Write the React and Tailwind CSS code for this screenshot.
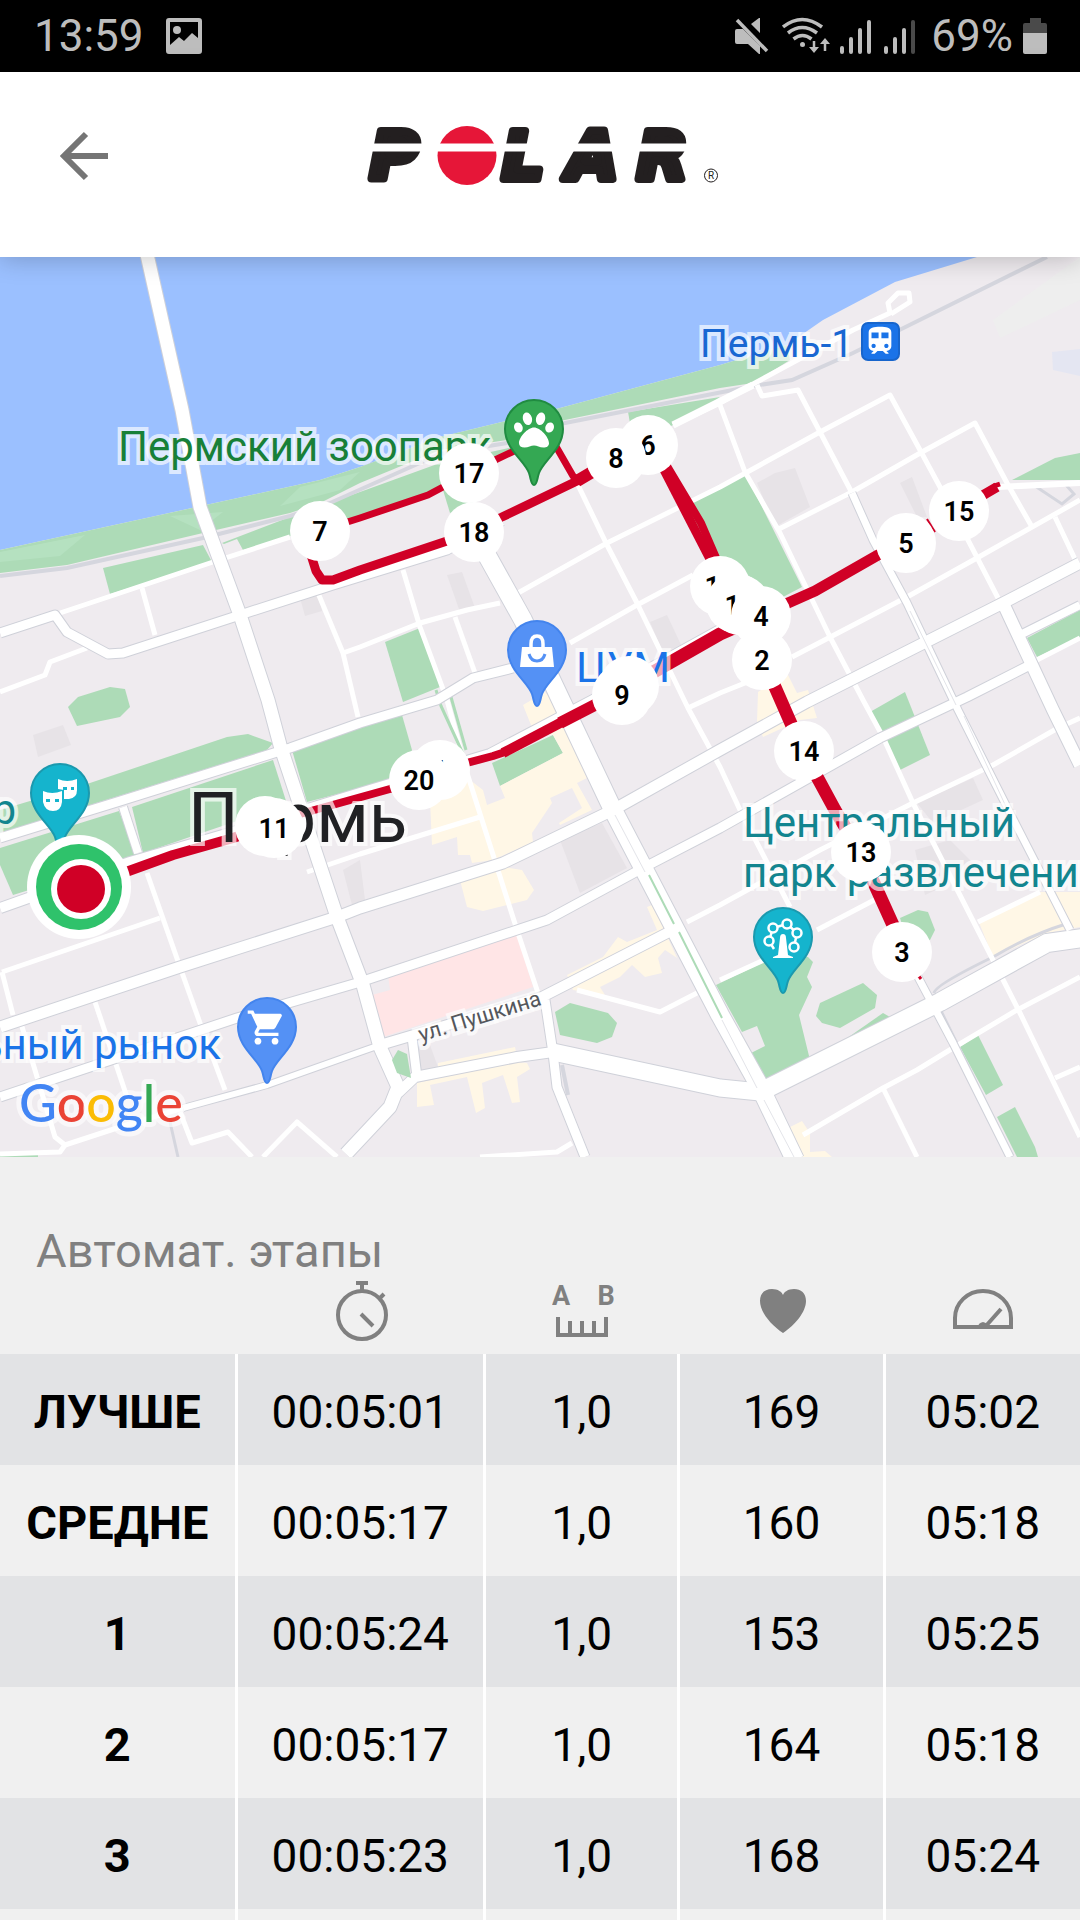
import { FaPaw } from 'react-icons/fa';
import { MdShoppingCart, MdTrain } from 'react-icons/md';

const LAPS = [
  { label: 'ЛУЧШЕ', time: '00:05:01', distance: '1,0', heartRate: '169', pace: '05:02' },
  { label: 'СРЕДНЕ', time: '00:05:17', distance: '1,0', heartRate: '160', pace: '05:18' },
  { label: '1', time: '00:05:24', distance: '1,0', heartRate: '153', pace: '05:25' },
  { label: '2', time: '00:05:17', distance: '1,0', heartRate: '164', pace: '05:18' },
  { label: '3', time: '00:05:23', distance: '1,0', heartRate: '168', pace: '05:24' },
];

// Later markers cover earlier ones
const MARKERS = [
  { n: '1', x: 440, y: 770 },
  { n: '20', x: 419, y: 780 },
  { n: '', x: 265, y: 826 },
  { n: '11', x: 274, y: 828 },
  { n: '', x: 629, y: 686 },
  { n: '9', x: 622, y: 695 },
  { n: '12', x: 720, y: 586 },
  { n: '', x: 736, y: 603 },
  { n: '16', x: 740, y: 605 },
  { n: '4', x: 761, y: 616 },
  { n: '2', x: 762, y: 660 },
  { n: '5', x: 906, y: 543 },
  { n: '15', x: 959, y: 511 },
  { n: '17', x: 469, y: 473 },
  { n: '18', x: 474, y: 532 },
  { n: '7', x: 320, y: 531 },
  { n: '6', x: 648, y: 445 },
  { n: '8', x: 616, y: 458 },
  { n: '14', x: 804, y: 751 },
  { n: '13', x: 861, y: 852 },
  { n: '3', x: 902, y: 952 },
];

const PARKS = [
  // river bank
  '0,550 320,480 360,467 440,437 560,408 720,365 787,345 790,360 753,383 720,388 560,421 507,440 440,450 360,483 320,503 290,513 203,533 67,565 0,573',
  '103,568 203,545 212,562 110,594',
  '222,543 290,517 360,492 440,463 513,447 495,460 443,487 360,517 287,537 243,550 237,539 224,544',
  '443,490 470,480 480,500 450,513',
  '628,412 720,397 713,402 673,425 640,440 630,423',
  '683,507 720,487 745,473 802,587 783,597 740,610 718,555',
  '78,697 110,687 125,689 130,707 120,717 77,726 68,707',
  '0,810 90,783 227,737 248,734 273,743 267,750 0,833',
  '0,848 119,811 136,855 100,868 13,895 0,865',
  '132,807 273,760 287,804 143,853',
  '292,750 360,728 402,715 412,750 400,778 307,802',
  '385,642 420,628 440,687 403,702',
  '492,763 553,735 563,753 500,786',
  '555,1012 570,1003 608,1013 617,1023 612,1037 597,1043 560,1035',
  '870,712 905,692 930,755 900,770',
  '1027,638 1080,610 1080,637 1037,657',
  '1012,480 1055,458 1080,453 1080,480',
  '716,985 783,953 808,957 813,962 807,977 812,987 799,1015 810,1060 765,1083 751,1053 765,1046 757,1026 742,1032',
  '820,1003 863,983 877,995 875,1008 840,1028 822,1023 816,1016',
  '823,1055 883,1013 890,1017',
  '900,918 918,910 928,912 935,930 930,940 910,950',
  '960,1047 978,1035 1003,1085 986,1095',
  '997,1117 1015,1107 1035,1147 1038,1157 1017,1157',
  '0,1155 38,1155 38,1157 0,1157',
];

const SHOPS = [
  '523,705 545,692 560,710 587,778 577,783 592,810 560,825 559,823 582,808 572,788 550,798 552,803 532,833 533,842 493,860 472,863 470,855 458,855 457,837 432,845 430,800 470,780 483,790 487,805 505,798 500,786 563,753 553,735 535,735',
  '460,880 503,867 522,870 534,890 527,900 483,911 467,907',
  '417,1083 515,1062 527,1063 530,1069 517,1077 520,1102 512,1103 503,1075 482,1083 485,1108 476,1113 467,1077 430,1085 434,1105 417,1107',
  '438,1063 515,1047 516,1052 438,1068',
  '567,975 603,957 618,937 627,942 657,930 647,907 652,905 663,927 677,958 665,950 658,958 662,973 645,977 632,965 620,977 600,987 605,995 573,990',
  '758,692 787,673 797,693 808,690 817,718 800,720 763,737 757,722',
  '978,920 1040,892 1080,892 1080,927 1047,933 993,957',
  '790,1127 802,1121 810,1133 810,1152 825,1151 832,1157 802,1157',
];

const BUILDINGS = [
  '757,483 775,473 795,468 810,507 775,527',
  '900,483 912,477 927,517 917,517',
  '560,840 602,823 627,868 580,893',
  '447,575 462,572 475,608 460,612',
  '650,622 667,615 682,647 662,650',
  '33,735 63,725 71,745 38,757',
  '415,1047 430,1045 438,1067 418,1072',
  '917,803 973,778 983,800 933,823',
  '915,850 950,840 980,870 925,895',
  '300,598 320,594 322,611 305,616',
  '343,870 360,860 365,900 352,905',
];

const STREETS = [
  '0,692 45,675 50,662 87,648',
  '60,613 213,562 290,537',
  '142,588 155,635',
  '318,593 343,653 358,717',
  '343,653 360,647 420,623 467,610 500,603',
  '403,570 420,627 447,700 467,773 517,930 538,993',
  '455,617 475,673',
  '757,385 762,396 798,390 820,432 852,493',
  '673,425 720,403 755,383 853,330 890,313 888,303 898,293 909,293 910,302 891,314',
  '720,405 745,472 780,533 830,637 863,700 883,737 913,803 993,960 1020,1013 1080,1137',
  '518,593 607,543 720,487 820,432 890,395 920,450 940,487 968,540 998,598',
  '777,530 852,492 922,452 975,423 1007,483 1032,527',
  '792,657 907,597 977,558 1080,500',
  '570,643 637,605 693,575',
  '688,708 720,693 760,677',
  '1055,517 1073,555 1080,570',
  '577,483 607,545 637,603 688,708 720,767 740,810 790,907',
  '817,930 880,897',
  '720,980 775,955',
  '687,922 720,905 820,850 913,803 993,765 1058,728 1080,718',
  '978,922 1040,892',
  '803,1135 883,1088 917,1070 953,1048 1017,1010 1080,977',
  '883,1088 917,1157',
  '1055,1078 1080,1067',
  '147,873 180,967 200,1023 225,1090',
  '2,972 160,918',
  '2,972 13,1015',
  '95,1002 127,1097',
  '307,872 360,854 480,817',
  '20,1020 55,1137 65,1145 60,1152 0,1154',
  '65,1145 120,1127 183,1108',
  '180,1112 192,1143 228,1132 252,1157',
  '263,1157 297,1122 337,1157',
  '480,1157 557,1152 572,1143',
  '577,990 660,1012 697,993',
  '1037,660 1080,638',
];

const ROADS = [
  { w: 8, p: '123,807 138,853' },
  { w: 7, p: '918,977 953,1043 1010,1157' },
  { w: 7, p: '852,493 873,540 907,603 958,710 1010,813 1070,930' },
  { w: 6, p: '183,1108 267,1085 360,1052 380,1045' },
  { w: 9, p: '0,633 55,615 67,632 108,654 123,653 240,615 333,585 447,550 502,521' },
  { w: 9, p: '0,838 117,802 290,748 360,723 437,700 473,678 513,668' },
  { w: 10, p: '0,908 130,862 233,832 360,793 490,754 593,700 720,630' },
  { w: 9, p: '545,1000 553,1053 557,1087 585,1157' },
  { w: 9, p: '412,1037 417,1077' },
  { w: 11, p: '0,1027 180,967 337,917 360,908 503,863 613,810 720,750 807,702 1003,603 1080,563' },
  { w: 9, p: '0,1097 237,1018 357,983 547,920 643,868 720,828 880,738 967,697 1030,665' },
  { w: 8, p: '1020,635 1080,605' },
  { w: 12, p: '1003,603 1053,710 1080,765' },
  { w: 10, p: '380,1045 542,997 673,930' },
  { w: 13, p: '146,250 182,410 200,507 240,615 268,700 280,745 337,917 363,985 380,1047 398,1087 390,1107 346,1154' },
  { w: 10, p: '398,1093 415,1077 517,1057 553,1052' },
  { w: 17, p: '553,1052 720,1088 760,1092' },
  { w: 18, p: '474,532 523,620 567,713 613,810 720,1015 760,1087 795,1160' },
  { w: 18, p: '760,1092 940,1002 1047,943 1090,937' },
];

const ROUTE = [
  { w: 7, p: '319,531 360,518 428,495 443,487 495,460 512,452 550,436 573,476 580,482' },
  { w: 9, p: '616,458 577,481 502,517 447,541 360,570 333,580 322,580 316,571 311,555' },
  { w: 12, p: '616,458 577,481' },
  { w: 9, p: '662,466 711,561' },
  { w: 8, p: '667,466 701,523 717,560' },
  { w: 11, p: '761,616 788,603 815,591 878,555 906,543' },
  { w: 2, p: '927,519 935,532' },
  { w: 10, p: '958,511 985,494 997,487' },
  { w: 5, p: '994,486 1000,484' },
  { w: 13, p: '761,616 720,634 622,690' },
  { w: 12, p: '622,691 560,723' },
  { w: 10, p: '562,722 503,753' },
  { w: 8, p: '508,751 493,756 440,770 390,789 300,814' },
  { w: 10, p: '300,815 233,838 173,855 79,889' },
  { w: 13, p: '762,660 775,687 803,751 835,810 860,852 902,945' },
  { w: 3, p: '918,975 921,979' },
];

function StatusBar() {
  return (
    <div className="flex h-[72px] shrink-0 items-center bg-black pl-[34px] pr-[33px] text-[44px] leading-none text-[#bdbdbd]">
      <span>13:59</span>
      <svg className="ml-[22px] size-9" viewBox="0 0 36 36" fill="currentColor">
        <path fillRule="evenodd" d="M3 0h30q3 0 3 3v30q0 3-3 3H3q-3 0-3-3V3q0-3 3-3zM4 4v23l9-8 5 4 8-8 6 5V4z" />
        <circle cx="11" cy="12" r="4" />
      </svg>
      <div className="ml-auto flex items-center">
        <svg className="w-[34px] h-[38px]" viewBox="736 17 34 38" fill="currentColor">
          <path d="M736 31q0-2 2-2h6l17 17v8h-1l-11-10h-11q-2 0-2-2zM752 24l8-6h1v15z" />
          <path d="M738 20l30 31" stroke="currentColor" strokeWidth="3.5" />
        </svg>
        <svg className="ml-[13px] w-[49px] h-[38px]" viewBox="783 17 49 38" fill="none" stroke="currentColor">
          <path d="M784 27q19-15 39 0M789 33q14-11 29 0M794.500 39q9-7 18 0" strokeWidth="3.500" />
          <circle cx="803.5" cy="44.500" r="2.500" fill="currentColor" stroke="none" />
          <path d="M815 41v10M826 51V41" strokeWidth="2.500" />
          <path d="M810 47h10l-5 6zM821 44h10l-5-6z" fill="currentColor" stroke="none" />
        </svg>
        <svg className="ml-[9px] w-[31px] h-[38px]" viewBox="0 0 31 38" stroke="currentColor" strokeWidth="4" strokeLinecap="round">
          <path d="M2 31v4M11 22v13M20 13v22M29 5v30" />
        </svg>
        <svg className="ml-[13px] w-[31px] h-[38px]" viewBox="0 0 31 38" stroke="currentColor" strokeWidth="4" strokeLinecap="round">
          <path d="M2 31v4M11 22v13M20 13v22" />
          <path d="M29 5v30" className="text-[#4a4a4a]" />
        </svg>
        <span className="ml-4">69%</span>
        <svg className="ml-[10px] w-6 h-[38px]" viewBox="0 0 24 38">
          <path d="M7 1h11v5h4q2 0 2 2v9H0V8q0-2 2-2h5z" fill="#4a4a4a" />
          <path d="M0 16h24v19q0 2-2 2H2q-2 0-2-2z" fill="currentColor" />
        </svg>
      </div>
    </div>
  );
}

function PolarLogo() {
  return (
    <svg className="h-[62px] w-[360px] overflow-visible" viewBox="361 125 360 62" role="img" aria-label="Polar">
      <g
        fill="#231f20"
        stroke="#231f20"
        strokeWidth="8"
        strokeLinejoin="round"
        className="font-['DejaVu_Sans'] text-[66px] font-bold italic"
      >
        <text x="371" y="179">P</text>
        <text x="503" y="179">L</text>
        <text x="568" y="179">A</text>
        <text x="638" y="179">R</text>
      </g>
      <circle cx="468" cy="155.500" r="29.500" fill="#e61638" />
      <path d="M361 147.500h360" stroke="#fff" strokeWidth="8" />
      <circle cx="712" cy="175.500" r="6.500" fill="none" stroke="#231f20" />
      <text x="712" y="179" textAnchor="middle" fill="#231f20" className="text-[10px]">R</text>
    </svg>
  );
}

function Header() {
  return (
    <header className="relative z-10 grid h-[185px] shrink-0 grid-cols-[1fr_auto_1fr] items-center bg-white pb-[18px] shadow-[0_2px_24px_rgba(0,0,0,0.22)]">
      <button type="button" aria-label="Назад" className="ml-[58px] size-[52px] text-[#757575]">
        <svg className="size-[52px]" viewBox="0 0 52 52" fill="none" stroke="currentColor" strokeWidth="6">
          <path d="M50 26H7M28 4L6 26l22 22" />
        </svg>
      </button>
      <PolarLogo />
    </header>
  );
}

function Pin({ x, y, color, border, children }) {
  return (
    <g transform={`translate(${x} ${y})`}>
      <path
        d="M0 56C-3 56-3 50-5 44C-9 32-29 20-29 0A29 29 0 0 1 29 0C29 20 9 32 5 44C3 50 3 56 0 56Z"
        fill={color}
        stroke={border}
        strokeWidth="2"
      />
      {children}
    </g>
  );
}

function MapLabels() {
  return (
    <g
      className="text-[42px]"
      stroke="#fff"
      strokeOpacity="0.68"
      strokeWidth="8"
      strokeLinejoin="miter"
      strokeMiterlimit="2"
      paintOrder="stroke"
    >
      <text x="118" y="461" fill="#188038">Пермский зоопарк</text>
      <text x="700" y="357" fill="#1967d2" className="text-[39px]">Пермь-1</text>
      <text x="576" y="682" fill="#1a73e8">ЦУМ</text>
      <text x="743" y="837" fill="#12858f">Центральный</text>
      <text x="743" y="887" fill="#12858f">парк развлечений</text>
      <text x="221" y="1059" textAnchor="end" fill="#1a73e8">ьный рынок</text>
      <text x="16" y="824" textAnchor="end" fill="#12858f">р</text>
      <text x="188" y="842" fill="#202124" className="text-[71px]">Пермь</text>
      <text transform="translate(421 1042) rotate(-17)" fill="#54575c" className="text-[22px]">ул. Пушкина</text>
    </g>
  );
}

function RouteMap() {
  return (
    <svg className="block h-[900px] w-full shrink-0" viewBox="0 257 1080 900" preserveAspectRatio="xMidYMid slice">
      <path d="M0 257h1080v900H0z" fill="#efebef" />
      <polygon points="993,320 1080,257 1080,300 1000,338" fill="#eeeeee" />
      <polygon points="1052,352 1080,349 1080,376 1053,370" fill="#e4e6f2" />
      <polygon points="0,257 977,257 895,282 823,320 787,345 720,365 560,408 440,437 360,467 320,480 0,550" fill="#9bc0ff" />
      <g fill="#addbb7">
        {PARKS.map((p) => <polygon key={p} points={p} />)}
      </g>
      <g fill="#b5e1c0">
        <polygon points="0,552 85,535 60,556 0,562" />
        <polygon points="170,516 223,512 200,530" />
        <polygon points="280,506 300,487 360,472 340,490" />
      </g>
      <g fill="#fff7e6">
        {SHOPS.map((p) => <polygon key={p} points={p} />)}
      </g>
      <g fill="#e7e3e7">
        {BUILDINGS.map((p) => <polygon key={p} points={p} />)}
      </g>
      <polygon points="388,975 517,935 533,987 383,1037 372,995 390,990" fill="#ffe5e6" />
      <g fill="none" stroke="#d5d6de" strokeWidth="4">
        <path d="M0 576L67 568L203 538L290 516L330 503L440 454L507 443L560 424L753 386L792 380L853 353L1047 257" />
        <path d="M934 993Q935 985 993 957Q1030 935 1066 924M1035 486L1062 504L1074 494L1066 485M170 1122L178 1157" strokeWidth="3" />
        <path d="M940 1010L1012 1157M562 1065L568 1095" strokeWidth="4" />
      </g>
      <g fill="none" strokeLinejoin="round">
        <g stroke="#fff" strokeWidth="5">
          {STREETS.map((p) => <polyline key={p} points={p} />)}
        </g>
        <path d="M436 690L441 706L464 756M449 690L466 750" stroke="#addbb7" strokeWidth="3" />
        <g stroke="#cfd1d9">
          {ROADS.map((r) => <polyline key={r.p} points={r.p} strokeWidth={r.w + 2} />)}
        </g>
        <g stroke="#fff">
          {ROADS.map((r) => <polyline key={r.p} points={r.p} strokeWidth={r.w} />)}
          <path d="M998 487L1080 483" strokeWidth="6" />
          <path d="M673 425L753 385" strokeWidth="7" />
        </g>
        <path d="M615 815L645 872M722 1020L757 1088M764 1100L794 1157M910 611L956 705M964 716L1008 811" stroke="#e3e4e9" strokeWidth="1" />
        <path d="M649 875L674 924M679 932L722 1018" stroke="#addbb7" strokeWidth="2" />
      </g>
      <polygon points="398,1050 407,1054 411,1078 397,1073 392,1060" fill="#addbb7" />
      <g fill="none" stroke="#d00026" strokeLinejoin="round">
        {ROUTE.map((r) => <polyline key={r.p} points={r.p} strokeWidth={r.w} />)}
      </g>

      <MapLabels />

      <Pin x={534} y={429} color="#34a853" border="#208b41">
        <FaPaw x="-20" y="-19" size="40" color="#fff" />
      </Pin>
      <Pin x={537} y={650} color="#5491f5" border="#4384ed">
        <path d="M-15-3h30l2 20h-34z" fill="#fff" />
        <path d="M-6 -3v-3q0-8 6-8t6 8v3" fill="none" stroke="#fff" strokeWidth="3.500" />
        <path d="M-8 4q2 7 8 7t8-7" fill="none" stroke="#5491f5" strokeWidth="3" />
      </Pin>
      <Pin x={267} y={1027} color="#5491f5" border="#4384ed">
        <MdShoppingCart x="-21" y="-20" size="41" color="#fff" />
      </Pin>
      <Pin x={60} y={793} color="#15b4cd" border="#1b99ae">
        <path d="M-2-14q9 4 19 0v11q0 8-8 9h-5v-9l-6-1z" fill="#fff" />
        <path d="M-17-2q9 4 19 0v11q-1 9-9 9t-10-9z" fill="#fff" />
        <path d="M3-6h4v3h-4zM11-6h3v3h-3zM-14 6h4v3h-4zM-5 6h4v3h-4z" fill="#15b4cd" />
      </Pin>
      <Pin x={783} y={937} color="#15b4cd" border="#1b99ae">
        <path d="M-9 12L-14 4L-10 -9L4 -13L14 -4L11 10" fill="none" stroke="#fff" strokeWidth="2.500" />
        <g fill="#15b4cd" stroke="#fff" strokeWidth="2.500">
          <circle cx="-14" cy="4" r="4.500" />
          <circle cx="-10" cy="-9" r="4.500" />
          <circle cx="4" cy="-13" r="4.500" />
          <circle cx="14" cy="-4" r="4.500" />
          <circle cx="11" cy="10" r="4.500" />
        </g>
        <path d="M-10 21v-1l5-2 2-17q0-4 3-4t3 4l2 17 5 2v1z" fill="#fff" />
      </Pin>
      <rect x="862" y="323" width="37" height="37" rx="6" fill="#1a73e8" stroke="#1765cc" strokeWidth="2" />
      <MdTrain x="863" y="324" size="34" color="#fff" />

      <g className="text-[27px] font-semibold" textAnchor="middle">
        {MARKERS.map((m) => (
          <g key={`${m.x}-${m.y}`}>
            <circle cx={m.x} cy={m.y} r="30" fill="#fff" />
            <text x={m.x} y={m.y + 10}>{m.n}</text>
          </g>
        ))}
      </g>

      <circle cx="79" cy="887" r="52" fill="#fff" />
      <circle cx="79" cy="887" r="43" fill="#2fc26b" />
      <circle cx="81" cy="889" r="30" fill="#fff" />
      <circle cx="81" cy="889" r="24" fill="#d00026" />

      <text
        x="19"
        y="1122"
        className="font-[Lato] text-[52px] font-medium"
        stroke="#fff"
        strokeOpacity="0.6"
        strokeWidth="10"
        strokeLinejoin="round"
        paintOrder="stroke"
      >
        <tspan fill="#4285f4">G</tspan>
        <tspan fill="#ea4335">o</tspan>
        <tspan fill="#fbbc04">o</tspan>
        <tspan fill="#4285f4">g</tspan>
        <tspan fill="#34a853">l</tspan>
        <tspan fill="#ea4335">e</tspan>
      </text>
    </svg>
  );
}

function StopwatchIcon() {
  return (
    <svg className="mx-auto h-[60px] w-[54px]" viewBox="0 0 54 60" fill="none" stroke="currentColor" strokeWidth="4">
      <circle cx="27" cy="34" r="24" />
      <path d="M21 2h12M27 2v8M44 18l5-5M26 33l12 12" />
    </svg>
  );
}

function DistanceIcon() {
  return (
    <svg className="mx-auto h-[60px] w-[62px]" viewBox="0 0 62 60" fill="currentColor">
      <text x="9" y="24" textAnchor="middle" className="text-[27px] font-bold">A</text>
      <text x="54" y="24" textAnchor="middle" className="text-[27px] font-bold">B</text>
      <path d="M6 36v18h48V36M18 40v14M30 40v14M42 40v14" fill="none" stroke="currentColor" strokeWidth="4" />
    </svg>
  );
}

function HeartIcon() {
  return (
    <svg className="mx-auto h-[60px] w-[48px]" viewBox="0 0 48 60" fill="currentColor">
      <path d="M24 52C12 44 1 31 1 20C1 12 6 8 13 8C19 8 23 11 24 14C25 11 29 8 35 8C42 8 47 12 47 20C47 31 36 44 24 52Z" />
    </svg>
  );
}

function PaceIcon() {
  return (
    <svg className="mx-auto h-[60px] w-[62px]" viewBox="0 0 62 60" fill="none" stroke="currentColor" strokeWidth="4">
      <path d="M3 46V37A28 27 0 0 1 59 37V46ZM33 46L49 28" />
      <path d="M26 46q0-4 5-5 5 1 5 5z" fill="currentColor" stroke="none" />
    </svg>
  );
}

function LapTable() {
  const cell = 'h-[111px] border-r-[3px] border-white p-0 pt-1 last:border-r-0';
  return (
    <table className="w-full table-fixed border-separate border-spacing-0 text-center text-[46px] leading-none">
      <colgroup>
        <col className="w-[22%]" />
        <col className="w-[23%]" />
        <col className="w-[18%]" />
        <col className="w-[19%]" />
        <col className="w-[18%]" />
      </colgroup>
      <thead className="text-[#808080]">
        <tr className="h-[73px] align-top">
          <td className="p-0" />
          <th aria-label="Время" className="p-0"><StopwatchIcon /></th>
          <th aria-label="Расстояние" className="p-0"><DistanceIcon /></th>
          <th aria-label="Пульс" className="p-0"><HeartIcon /></th>
          <th aria-label="Темп" className="p-0"><PaceIcon /></th>
        </tr>
      </thead>
      <tbody>
        {LAPS.map((lap) => (
          <tr key={lap.label} className="odd:bg-[#e2e3e5]">
            <th scope="row" className={`${cell} text-[47px] font-bold`}>{lap.label}</th>
            <td className={cell}>{lap.time}</td>
            <td className={cell}>{lap.distance}</td>
            <td className={cell}>{lap.heartRate}</td>
            <td className={cell}>{lap.pace}</td>
          </tr>
        ))}
        <tr aria-hidden="true">
          <td className={cell} />
          <td className={cell} />
          <td className={cell} />
          <td className={cell} />
          <td className={cell} />
        </tr>
      </tbody>
    </table>
  );
}

export default function App() {
  return (
    <div className="flex h-screen flex-col overflow-hidden bg-[#f0f0f0] font-[Roboto,sans-serif] text-black">
      <StatusBar />
      <Header />
      <RouteMap />
      <section className="pt-[64px]">
        <h2 className="pl-9 text-[47px] leading-[60px] text-[#808080]">Автомат. этапы</h2>
        <LapTable />
      </section>
    </div>
  );
}
